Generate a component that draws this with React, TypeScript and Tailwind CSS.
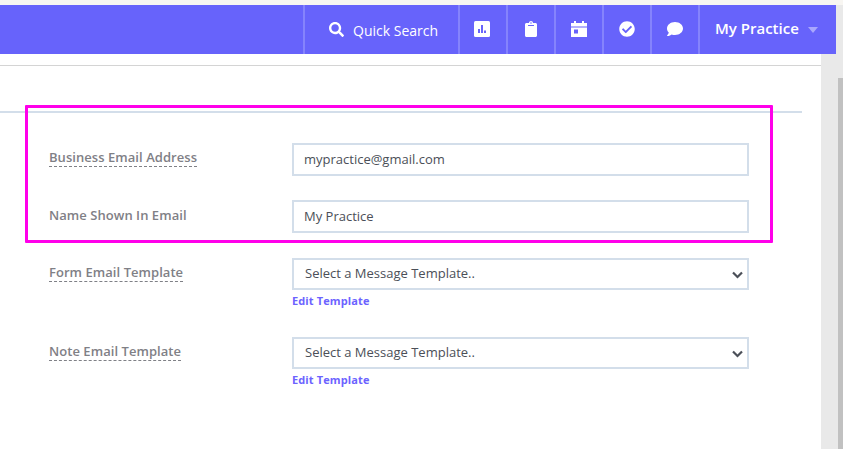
import type { ReactNode } from 'react';
import { FaSearch, FaClipboard, FaCheckCircle, FaComment } from 'react-icons/fa';

function ChartIcon() {
  return (
    <svg width="16" height="16" viewBox="0 0 16 16" className="mr-[2px]">
      <rect width="16" height="16" rx="1.5" fill="#fff" />
      <path d="M4 8h2v4H4zM7 4h2v8H7zM10 9.500h2V12h-2z" fill="#6763fb" />
    </svg>
  );
}

function CalendarIcon() {
  return (
    <svg width="16" height="16" viewBox="0 0 16 16">
      <path d="M3 0h2v2h6V0h2v2h3v3.500H0V2h3zM0 6.500h16V16H0z" fill="#fff" />
      <rect x="3" y="8.500" width="4" height="4" fill="#6763fb" />
    </svg>
  );
}

const navIcons: ReactNode[] = [
  <ChartIcon key="chart" />,
  <FaClipboard key="clipboard" className="text-[16px]" />,
  <CalendarIcon key="calendar" />,
  <FaCheckCircle key="check" className="text-[16px]" />,
  <FaComment key="comment" className="text-[16px]" />,
];

function Chevron() {
  return (
    <svg width="11" height="8" viewBox="0 0 11 8" className="absolute right-[4px] top-[11px]">
      <path d="M1 1.500 L5.500 6 L10 1.500" fill="none" stroke="#4b4f58" strokeWidth="2.2" />
    </svg>
  );
}

function Field({ label, dashed, value, labelClass }: { label: string; dashed?: boolean; value: string; labelClass: string }) {
  return (
    <div className="flex h-[33px]">
      <div className={`w-[243px] ${labelClass}`}>
        <span className={`text-[13px] tracking-[0.05px] font-semibold text-[#7f8086] ${dashed ? 'border-b border-dashed border-[#7f8086]' : ''}`}>
          {label}
        </span>
      </div>
      <div className="flex h-[33px] w-[457px] items-center border-2 border-[#d3deea] pl-[10px] text-[13px] text-[#4b4f58]">
        {value}
      </div>
    </div>
  );
}

function SelectField({ label, labelClass }: { label: string; labelClass: string }) {
  return (
    <div className="flex">
      <div className={`w-[243px] ${labelClass}`}>
        <span className="border-b border-dashed border-[#7f8086] text-[13px] tracking-[0.05px] font-semibold text-[#7f8086]">{label}</span>
      </div>
      <div className="w-[457px]">
        <div className="relative flex h-[32px] items-center border-2 border-[#d3deea] pl-[11px] text-[13px] text-[#4b4f58]">
          Select a Message Template..
          <Chevron />
        </div>
        <div className="mt-[3px] text-[11px] tracking-[0.12px] leading-[16px] font-bold text-[#6c63ff]">Edit Template</div>
      </div>
    </div>
  );
}

export default function App() {
  return (
    <div className="relative flex h-[449px] w-[843px] overflow-hidden bg-white font-['Open_Sans',sans-serif]">
      <main className="w-[821px] shrink-0">
        <div className="h-[66px] border-b border-[#d4d4d4]" />
        <div className="mt-[45px] h-[2px] w-[802px] bg-[#d3deea]" />
        <div className="pt-[30px] pl-[49px]">
          <Field label="Business Email Address" dashed value="mypractice@gmail.com" labelClass="pt-[1px]" />
          <div className="mt-[24px]">
            <Field label="Name Shown In Email" value="My Practice" labelClass="pt-[2px]" />
          </div>
          <div className="mt-[25px]">
            <SelectField label="Form Email Template" labelClass="pt-[1px]" />
          </div>
          <div className="mt-[27.5px]">
            <SelectField label="Note Email Template" labelClass="pt-[1.5px]" />
          </div>
        </div>
      </main>

      {/* scrollbar */}
      <div className="flex flex-1 justify-end bg-[#e9e9e9]">
        <div className="mt-[78px] w-[5px] bg-[#c1c1c1]" />
      </div>

      {/* top strip + header */}
      <div className="absolute top-0 left-0 h-[5px] w-full bg-[#f8f6f2]" />
      <header className="absolute top-[5px] left-0 flex h-[49px] w-[836px] justify-end bg-[#6763fb] text-white">
        <div className="flex w-[155px] items-center border-l-2 border-[#8583fc] pl-[24px]">
          <FaSearch className="text-[15px]" />
          <span className="mt-[2px] ml-[9px] text-[14px]">Quick Search</span>
        </div>
        {navIcons.map((icon, i) => (
          <div key={i} className="flex w-[48px] items-center justify-center border-l-2 border-[#8583fc] pb-[2px]">
            {icon}
          </div>
        ))}
        <div className="flex w-[138px] items-center border-l-2 border-[#8583fc] pb-[2px] pl-[15px]">
          <span className="text-[15px] font-semibold">My Practice</span>
          <span className="mt-[3px] ml-[9px] h-0 w-0 border-x-[5px] border-t-[6px] border-x-transparent border-t-[#a9a7fd]" />
        </div>
      </header>

      {/* highlight annotation */}
      <div className="absolute top-[105px] left-[25px] h-[138px] w-[748px] rounded-[1px] border-[3px] border-[#ff00ea]" />
    </div>
  );
}
